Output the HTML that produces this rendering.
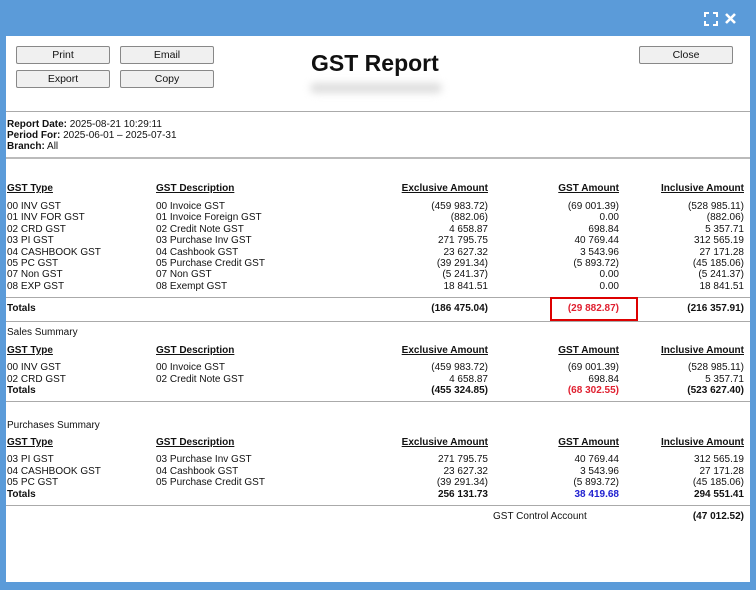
<!DOCTYPE html>
<html><head><style>
body{margin:0;width:756px;height:590px;background:#5b9bd9;font-family:"Liberation Sans",Arial,sans-serif;font-size:10px;color:#111;position:relative;overflow:hidden}
.p{position:absolute;left:6px;top:36px;width:744px;height:546px;background:#fff}
.t{position:absolute;line-height:12px;white-space:nowrap}
.r{text-align:right}
.b{font-weight:bold}
.u{text-decoration:underline;font-weight:bold}
.btn{position:absolute;height:16px;border:1px solid #888;border-radius:2px;background:#f0f0f0;text-align:center;line-height:16px;font-size:10.5px}
.hl{position:absolute;left:6px;width:744px;height:1px;background:#aaa}
</style></head><body>
<svg style="position:absolute;left:704px;top:12px" width="14" height="14" viewBox="0 0 14 14" fill="none" stroke="#fff" stroke-width="2"><path d="M1 5V1h4M9 1h4v4M13 9v4H9M5 13H1V9"/></svg>
<svg style="position:absolute;left:724px;top:12px" width="13" height="13" viewBox="0 0 13 13" stroke="#fff" stroke-width="2.6"><path d="M2 2l9 9M11 2l-9 9"/></svg>
<div class="p"></div>
<div class="btn" style="left:16px;top:46px;width:92px">Print</div>
<div class="btn" style="left:120px;top:46px;width:92px">Email</div>
<div class="btn" style="left:16px;top:70px;width:92px">Export</div>
<div class="btn" style="left:120px;top:70px;width:92px">Copy</div>
<div class="btn" style="left:639px;top:46px;width:92px">Close</div>
<div class="t b" style="left:311px;top:50px;font-size:23px;line-height:26px">GST Report</div>
<div style="position:absolute;left:310px;top:83px;width:132px;height:10px;background:#ddd;filter:blur(4px);border-radius:6px"></div>
<div class="hl" style="top:111px"></div>
<div class="t" style="left:7px;top:119px"><b>Report Date:</b> 2025-08-21 10:29:11</div>
<div class="t" style="left:7px;top:130px"><b>Period For:</b> 2025-06-01 – 2025-07-31</div>
<div class="t" style="left:7px;top:141px"><b>Branch:</b> All</div>
<div class="hl" style="top:157px;height:2px;background:#bbb"></div>
<div class="hl" style="top:297px"></div>
<div class="hl" style="top:321px"></div>
<div class="hl" style="top:401px"></div>
<div class="hl" style="top:505px"></div>
<div style="position:absolute;left:550px;top:297px;width:84px;height:20px;border:2px solid #d00"></div>
<div id="c"></div>
<script>
var H='';
function row(y,a,b,c,d,e,cls,cc){
 H+='<div class="t '+(cls||'')+'" style="left:7px;top:'+(y-6)+'px">'+a+'</div>';
 if(b)H+='<div class="t '+(cls||'')+'" style="left:156px;top:'+(y-6)+'px">'+b+'</div>';
 var xs=[488,619,744],v=[c,d,e];
 for(var i=0;i<3;i++)if(v[i])H+='<div class="t r '+(cls||'')+'" style="right:'+(756-xs[i])+'px;top:'+(y-6)+'px;'+(i==1&&cc?'color:'+cc:'')+'">'+v[i]+'</div>';
}
function hdr(y){row(y,'GST Type','GST Description','Exclusive Amount','GST Amount','Inclusive Amount','u');}
hdr(189);
var d=[['00 INV GST','00 Invoice GST','(459 983.72)','(69 001.39)','(528 985.11)'],
['01 INV FOR GST','01 Invoice Foreign GST','(882.06)','0.00','(882.06)'],
['02 CRD GST','02 Credit Note GST','4 658.87','698.84','5 357.71'],
['03 PI GST','03 Purchase Inv GST','271 795.75','40 769.44','312 565.19'],
['04 CASHBOOK GST','04 Cashbook GST','23 627.32','3 543.96','27 171.28'],
['05 PC GST','05 Purchase Credit GST','(39 291.34)','(5 893.72)','(45 185.06)'],
['07 Non GST','07 Non GST','(5 241.37)','0.00','(5 241.37)'],
['08 EXP GST','08 Exempt GST','18 841.51','0.00','18 841.51']];
for(var i=0;i<8;i++)row(207+i*11.4,d[i][0],d[i][1],d[i][2],d[i][3],d[i][4]);
row(309,'Totals','','(186 475.04)','(29 882.87)','(216 357.91)','b','#e02030');
row(333,'Sales Summary');
hdr(351);
row(368,d[0][0],d[0][1],d[0][2],d[0][3],d[0][4]);
row(379.5,d[2][0],d[2][1],d[2][2],d[2][3],d[2][4]);
row(391,'Totals','','(455 324.85)','(68 302.55)','(523 627.40)','b','#e02030');
row(426,'Purchases Summary');
hdr(443);
for(var j=0;j<3;j++){var q=d[3+j];row(460+j*11.5,q[0],q[1],q[2],q[3],q[4]);}
row(495,'Totals','','256 131.73','38 419.68','294 551.41','b','#2020d0');
H+='<div class="t" style="left:493px;top:511px">GST Control Account</div>';
H+='<div class="t r b" style="right:12px;top:511px">(47 012.52)</div>';
document.getElementById('c').innerHTML=H;
</script>
</body></html>
